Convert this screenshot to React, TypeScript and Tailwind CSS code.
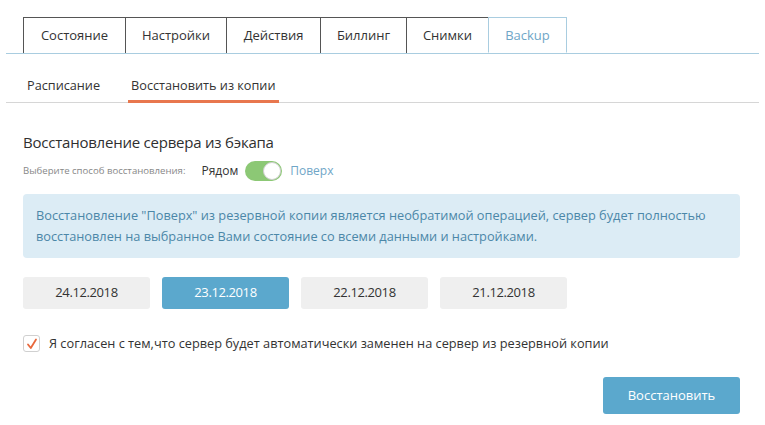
import { useState } from 'react'

const tabs = ['Состояние', 'Настройки', 'Действия', 'Биллинг', 'Снимки', 'Backup']
const tabWidths = ['w-[102px]', 'w-[101px]', 'w-[94px]', 'w-[86px]', 'w-[82px]', 'w-[79px]']
const dates = ['24.12.2018', '23.12.2018', '22.12.2018', '21.12.2018']

export default function App() {
  const [active, setActive] = useState(1)
  const [agreed, setAgreed] = useState(true)

  return (
    <div className="h-[425px] w-[765px] bg-white px-[6px] font-['Open_Sans',sans-serif] text-[#333]">
      {/* main tabs */}
      <nav className="mt-[17px] flex border-b border-[#a9cde0] pl-[17px]">
        {tabs.map((tab, i) => {
          const last = i === tabs.length - 1
          return (
            <div
              key={tab}
              className={
                'flex h-[36px] items-center justify-center pt-px text-[13px] ' +
                tabWidths[i] +
                (last
                  ? ' -mb-px border border-b-white border-[#a9cde0] bg-white text-[#6fa6c7]'
                  : ' border-y border-l border-[#555] border-b-0 text-[#333]') +
                (i === tabs.length - 2 ? ' border-r-0' : '')
              }
            >
              {tab}
            </div>
          )
        })}
      </nav>

      {/* sub tabs */}
      <div className="mt-[22px] flex border-b border-[#d6d6d6] pl-[17px] text-[12.7px]">
        <div className="px-[4px] pb-[7px]">Расписание</div>
        <div className="relative ml-[24px] px-[3px] pb-[7px]">
          Восстановить из копии
          <span className="absolute bottom-[-1px] left-0 h-[3px] w-full bg-[#e8774e]" />
        </div>
      </div>

      <section className="px-[17px]">
        <h2 className="mt-[29px] text-[15px] leading-[20px] tracking-[-0.015em] text-[#2f2f2f]">
          Восстановление сервера из бэкапа
        </h2>
        <div className="mt-[9px] flex items-center">
          <span className="text-[9.6px] text-[#888]">Выберите способ восстановления:</span>
          <span className="ml-[16px] text-[12px] text-[#333]">Рядом</span>
          <button className="ml-[7px] flex h-[20px] w-[37px] items-center justify-end rounded-full bg-[#8cc875] p-[1px]">
            <span className="h-[18px] w-[18px] rounded-full border border-[#cfcfcf] bg-white" />
          </button>
          <span className="ml-[8px] text-[12px] text-[#6fa6c7]">Поверх</span>
        </div>

        <div className="mt-[13px] w-[717px] rounded-[4px] bg-[#dcecf5] px-[13px] py-[11px] text-[12.75px] leading-[21px] text-[#4b87a8]">
          Восстановление "Поверх" из резервной копии является необратимой операцией, сервер будет полностью
          восстановлен на выбранное Вами состояние со всеми данными и настройками.
        </div>

        <div className="mt-[19px] flex gap-[12px]">
          {dates.map((d, i) => (
            <button
              key={d}
              onClick={() => setActive(i)}
              className={
                'h-[32px] w-[127px] rounded-[3px] text-[13px] tracking-[-0.03em] ' +
                (i === active ? 'bg-[#5ba8cd] text-white' : 'bg-[#efefef] text-[#333]')
              }
            >
              {d}
            </button>
          ))}
        </div>

        <label className="mt-[25px] flex items-center gap-[9px] text-[12.75px] text-[#333]">
          <span
            onClick={() => setAgreed(!agreed)}
            className="flex h-[17px] w-[17px] items-center justify-center rounded-[3px] border border-[#d0d0d0] bg-white"
          >
            {agreed && (
              <svg width="12" height="12" viewBox="0 0 12 12" fill="none">
                <path d="M2 6.5 L4.8 10 L10 1.5" stroke="#e8683c" strokeWidth="1.8" strokeLinecap="round" strokeLinejoin="round" />
              </svg>
            )}
          </span>
          Я согласен с тем,что сервер будет автоматически заменен на сервер из резервной копии
        </label>

        <div className="mt-[24px] flex w-[717px] justify-end">
          <button className="h-[37px] w-[137px] rounded-[3px] bg-[#5ba8cd] text-[13px] text-white">
            Восстановить
          </button>
        </div>
      </section>
    </div>
  )
}
